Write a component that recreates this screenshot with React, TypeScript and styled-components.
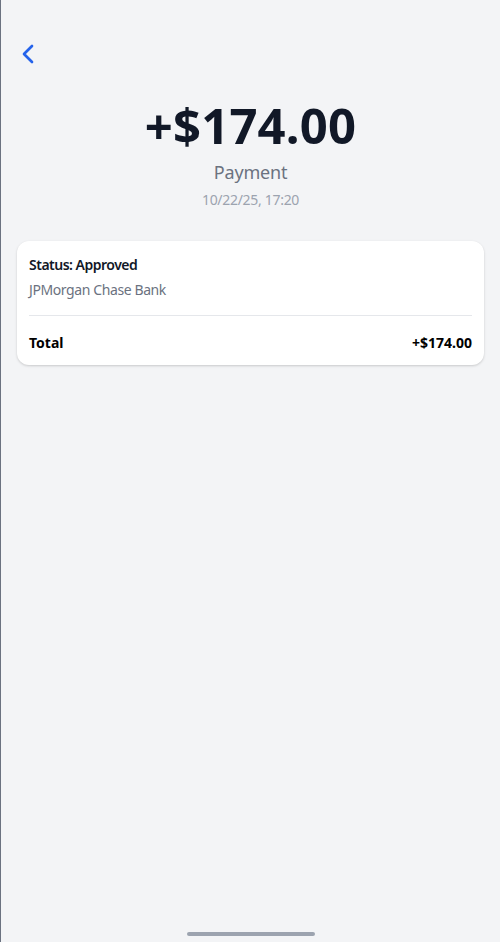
import React from "react";
import styled, { createGlobalStyle } from "styled-components";

const Global = createGlobalStyle`
  html, body { margin: 0; padding: 0; background: #f3f4f6; }
  body { font-family: "Noto Sans", "Open Sans", Arial, sans-serif; -webkit-font-smoothing: antialiased; }
  * { box-sizing: border-box; }
`;

const Screen = styled.div`
  position: relative;
  min-height: 942px;
  width: 500px;
  background: #f3f4f6;
  border-left: 1px solid #6b7280;
  padding: 0 16px;
  display: flex;
  flex-direction: column;
`;

const Header = styled.div`
  display: flex;
  align-items: center;
  padding-top: 38px;
  height: 70px;
`;

const BackButton = styled.button`
  border: none;
  background: transparent;
  padding: 0;
  margin-left: -5px;
  width: 32px;
  height: 32px;
  display: flex;
  align-items: center;
  justify-content: center;
  color: #2563eb;
  cursor: pointer;
`;

const Hero = styled.div`
  display: flex;
  flex-direction: column;
  align-items: center;
  padding-top: 27px;
`;

const Amount = styled.div`
  font-size: 49px;
  font-weight: 700;
  line-height: 56px;
  color: #111827;
  letter-spacing: 0.2px;
`;

const Kind = styled.div`
  margin-top: 7px;
  font-size: 18px;
  line-height: 24px;
  color: #6b7280;
  letter-spacing: -0.2px;
`;

const DateText = styled.div`
  margin-top: 6px;
  font-size: 14px;
  line-height: 20px;
  color: #9ca3af;
  letter-spacing: -0.3px;
`;

const Card = styled.div`
  margin-top: 31px;
  background: #ffffff;
  border-radius: 12px;
  box-shadow: 0 1px 3px rgba(0, 0, 0, 0.12), 0 1px 2px rgba(0, 0, 0, 0.06);
  padding: 14px 12px 12px;
`;

const Status = styled.div`
  font-size: 14px;
  font-weight: 600;
  line-height: 20px;
  color: #111827;
  letter-spacing: -0.5px;
`;

const Bank = styled.div`
  margin-top: 5px;
  font-size: 14px;
  line-height: 20px;
  color: #6b7280;
  letter-spacing: -0.4px;
`;

const Divider = styled.div`
  height: 1px;
  background: #e5e7eb;
  margin: 15px 0 17px;
`;

const TotalRow = styled.div`
  display: flex;
  justify-content: space-between;
  align-items: center;
  font-size: 14px;
  font-weight: 700;
  line-height: 20px;
  color: #000000;
`;

const HomeIndicator = styled.div`
  position: absolute;
  left: 50%;
  bottom: 6px;
  transform: translateX(-50%);
  width: 128px;
  height: 4px;
  border-radius: 2px;
  background: #9ca3af;
`;

export default function App() {
  return (
    <>
      <Global />
      <Screen>
        <Header>
          <BackButton aria-label="Back">
            <svg width="32" height="32" viewBox="0 0 24 24" fill="none" stroke="currentColor" strokeWidth="2" strokeLinecap="round" strokeLinejoin="round">
              <path d="m15 18-6-6 6-6" />
            </svg>
          </BackButton>
        </Header>
        <Hero>
          <Amount>+$174.00</Amount>
          <Kind>Payment</Kind>
          <DateText>10/22/25, 17:20</DateText>
        </Hero>
        <Card>
          <Status>Status: Approved</Status>
          <Bank>JPMorgan Chase Bank</Bank>
          <Divider />
          <TotalRow>
            <span>Total</span>
            <span>+$174.00</span>
          </TotalRow>
        </Card>
        <HomeIndicator />
      </Screen>
    </>
  );
}
